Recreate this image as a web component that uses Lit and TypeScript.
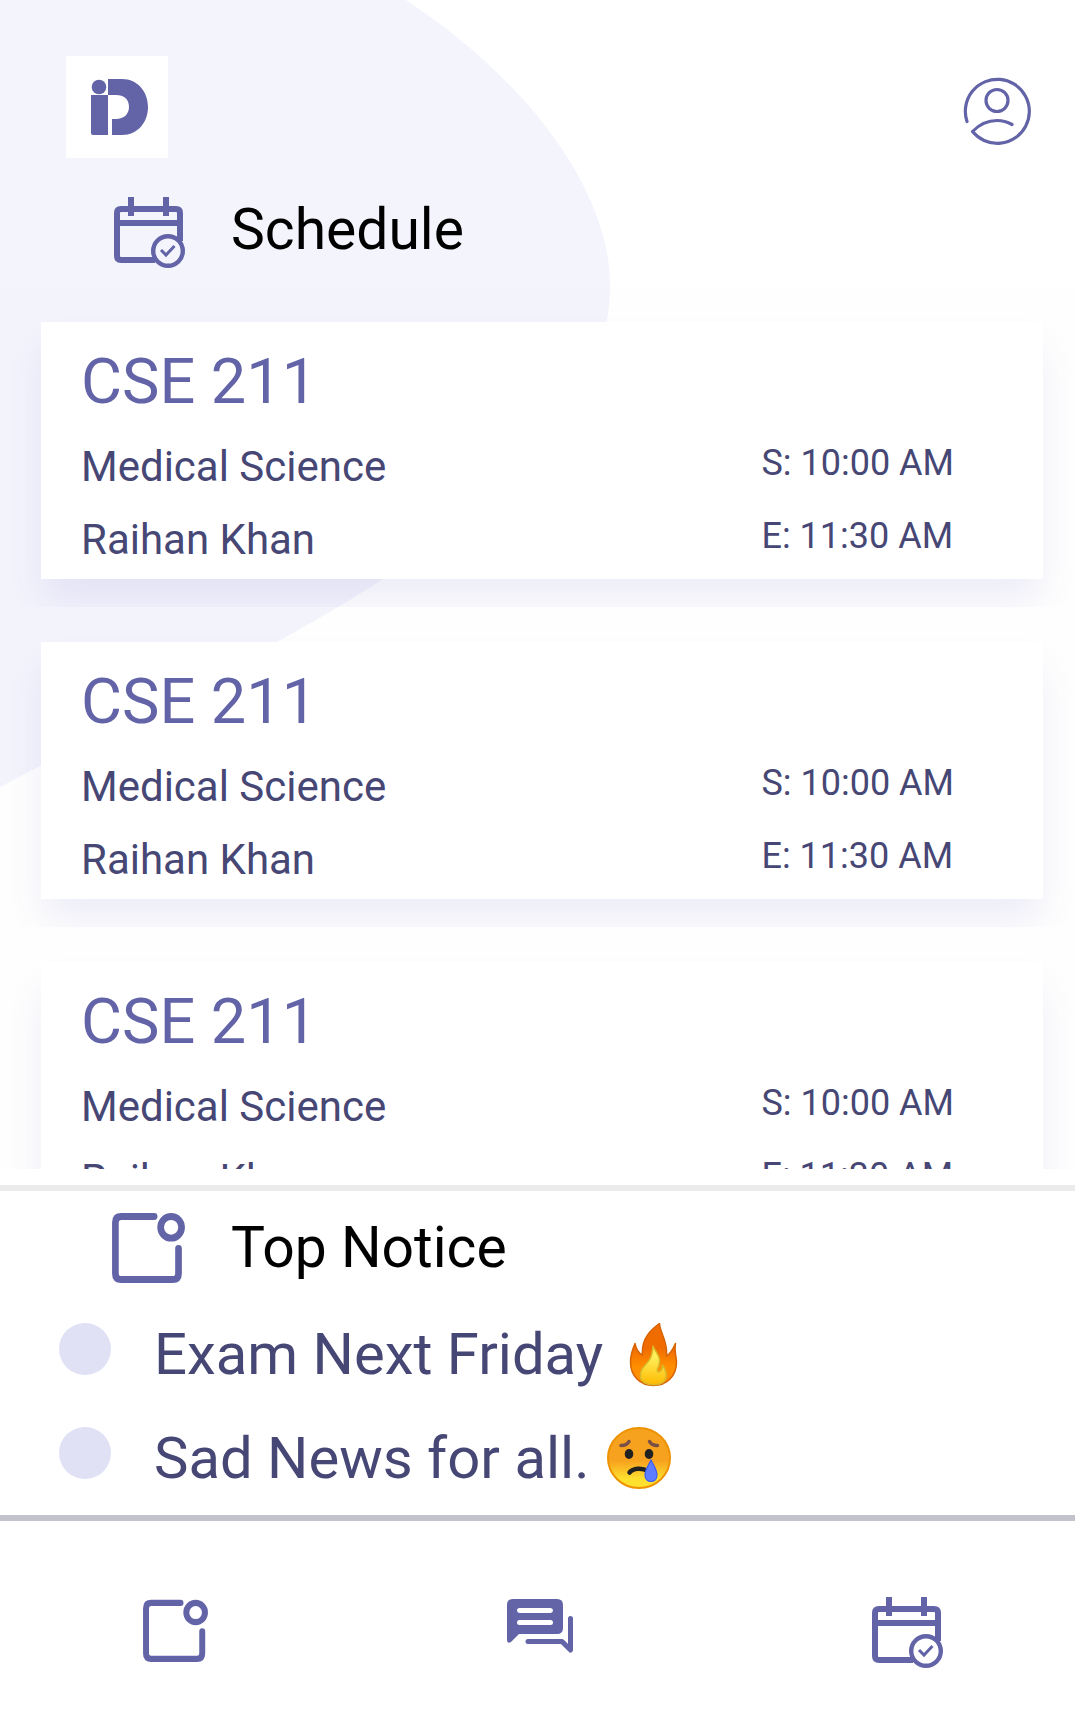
import { LitElement, html, css, svg } from "lit";
import { customElement, property } from "lit/decorators.js";

interface ClassSlot {
  code: string;
  subject: string;
  teacher: string;
  start: string;
  end: string;
}

const slots: ClassSlot[] = Array.from({ length: 3 }, () => ({
  code: "CSE 211",
  subject: "Medical Science",
  teacher: "Raihan Khan",
  start: "10:00 AM",
  end: "11:30 AM",
}));

const fireEmoji = html`
  <svg width="64" height="64" viewBox="0 0 64 64" role="img" aria-label="🔥">
    <defs>
      <linearGradient id="flame" x1="0" y1="0" x2="0" y2="1">
        <stop offset="0.400" stop-color="#f06c00" />
        <stop offset="0.700" stop-color="#ff8f00" />
      </linearGradient>
      <linearGradient id="core" x1="0" y1="0" x2="0" y2="1">
        <stop offset="0.300" stop-color="#ffee58" />
        <stop offset="1" stop-color="#ffb900" />
      </linearGradient>
    </defs>
    <path d="M38.500 0.500C39 10 47 18 45.500 33C49 31 52 26 54.500 20.500C53 29 55.500 34 55.500 39C55.500 53 46 62.500 32.500 62.500C19 62.500 9.500 53 9.500 39C9.500 32 12 25 14 20.500C15 26 17 30 21.500 32C20 15 31 6 38.500 0.500Z" fill="url(#flame)" stroke="#d66400" stroke-width="1.500" stroke-linejoin="round" />
    <path d="M32 23C35 30 40.500 34 38 42C37 45 35 47 37 49C40 49 41.500 46 41.500 42C45 47 46.500 52 44 57C42 60 38 61.800 32.500 61.800C26 61.800 20 59 19.500 54C19 46 23 44 26 40C31 35 31.500 29 32 23Z" fill="url(#core)" stroke="#d9b82b" stroke-width="1.500" stroke-linejoin="round" />
  </svg>
`;

const cryEmoji = html`
  <svg width="64" height="64" viewBox="0 0 64 64" role="img" aria-label="😢">
    <defs>
      <linearGradient id="face" x1="0" y1="0" x2="0" y2="1">
        <stop offset="0.550" stop-color="#f7a21f" />
        <stop offset="0.850" stop-color="#ffe02e" />
      </linearGradient>
    </defs>
    <ellipse cx="32" cy="31" rx="31" ry="30" fill="url(#face)" stroke="#ed9200" stroke-width="2" />
    <ellipse cx="22" cy="27" rx="4.300" ry="5" fill="#212121" />
    <ellipse cx="42" cy="27" rx="4.300" ry="5" fill="#212121" />
    <path d="M14 18.500Q20 18.500 22 14.500M50.500 18.500Q44.500 18.500 42.500 14.500" fill="none" stroke="#795046" stroke-width="3.500" stroke-linecap="round" />
    <path d="M22.500 45.500C26 41 35 40.500 41 44" fill="none" stroke="#212121" stroke-width="4.500" stroke-linecap="round" />
    <path d="M44 33C46 38 50 42 50 48C50 52 47.500 54.500 44 54.500C40.500 54.500 38 52 38 48C38 42 42 38 44 33Z" fill="#5c7dff" stroke="#3d5bf0" stroke-width="1.200" />
  </svg>
`;

const notices = [
  { text: "Exam Next Friday", emoji: fireEmoji },
  { text: "Sad News for all.", emoji: cryEmoji },
];

const calendarIcon = html`
  <svg width="71" height="71" viewBox="0 0 71 71" fill="none" stroke="currentColor" aria-hidden="true">
    <path d="M41 63H7Q3 63 3 59V16Q3 12 7 12H62Q66 12 66 16V44" stroke-width="6" />
    <path d="M3 26H66" stroke-width="6" />
    <path d="M17 0V19M52 0V19" stroke-width="6" />
    <circle cx="54" cy="54" r="14.800" stroke-width="4.400" />
    <path d="M47 53L52 58L60.500 49" stroke-width="3" />
  </svg>
`;

const noticeShape = svg`
  <path d="M41 3.300H9Q3.300 3.300 3.300 9V57Q3.300 62.700 9 62.700H59Q64.700 62.700 64.700 57V33.500" stroke-width="6.500" stroke-linecap="round" />
  <circle cx="57.500" cy="13.500" r="10.200" stroke-width="6.500" />
`;

@customElement("schedule-card")
export class ScheduleCard extends LitElement {
  @property({ attribute: false }) slotData!: ClassSlot;

  static styles = css`
    :host {
      display: block;
      padding: 35px 32px 28px 41px;
      overflow: hidden;
    }
    .card {
      background: #fff;
      padding: 15px 89px 3px 40px;
      box-shadow: 0 24px 36px -4px rgba(90, 92, 190, 0.11);
    }
    .code {
      margin: 0;
      font-size: 63px;
      line-height: 89px;
      font-weight: 400;
      color: #6264a7;
    }
    .body {
      display: flex;
      justify-content: space-between;
      color: #464775;
      line-height: 73px;
    }
    p {
      margin: 0;
    }
    .who {
      padding-top: 4px;
      font-size: 42px;
    }
    .when {
      padding-top: 1px;
      font-size: 36px;
    }
  `;

  render() {
    const s = this.slotData;
    return html`
      <article class="card">
        <h3 class="code">${s.code}</h3>
        <div class="body">
          <div class="who">
            <p>${s.subject}</p>
            <p>${s.teacher}</p>
          </div>
          <div class="when">
            <p>S: ${s.start}</p>
            <p>E: ${s.end}</p>
          </div>
        </div>
      </article>
    `;
  }
}

@customElement("app-root")
export class AppRoot extends LitElement {
  static styles = css`
    :host {
      display: flex;
      flex-direction: column;
      position: relative;
      height: 100vh;
      overflow: hidden;
      background: #fff;
      font-family: Roboto, sans-serif;
      color: #464775;
    }
    * {
      box-sizing: border-box;
    }
    svg {
      display: block;
      flex: none;
    }
    .blob {
      position: absolute;
      top: 0;
      left: 0;
    }
    header,
    .schedule,
    .notices,
    nav {
      position: relative;
    }
    header {
      display: flex;
      justify-content: space-between;
      align-items: flex-end;
      padding: 56px 44px 0 66px;
    }
    .profile {
      padding: 0 0 13px;
      border: 0;
      background: none;
      color: #6264a7;
      cursor: pointer;
    }
    .schedule {
      flex: 1;
      min-height: 0;
      display: flex;
      flex-direction: column;
      padding-bottom: 16px;
    }
    .heading {
      display: flex;
      align-items: flex-start;
      gap: 46px;
      padding: 39px 32px 19px 114px;
      color: #6264a7;
    }
    .heading.centered {
      align-items: center;
      padding: 22px 32px 19px 112px;
    }
    h2 {
      margin: 0;
      font-size: 57px;
      line-height: 66px;
      font-weight: 400;
      color: #000;
    }
    .list {
      flex: 1;
      min-height: 0;
      overflow-y: auto;
      scrollbar-width: none;
      background: rgba(0, 0, 0, 0.004);
    }
    .notices {
      border-top: 6px solid #ebebec;
      border-bottom: 6px solid #c3c3cb;
      padding-bottom: 5px;
    }
    ul {
      list-style: none;
      margin: 0;
      padding: 0;
    }
    .notice {
      display: flex;
      align-items: flex-start;
      height: 104px;
      padding: 21px 32px 0 59px;
      font-size: 58px;
      line-height: 62px;
    }
    .dot {
      flex: none;
      width: 52px;
      height: 52px;
      margin-right: 43px;
      border-radius: 50%;
      background: #e1e1f6;
    }
    .label {
      margin-right: 18px;
    }
    nav {
      display: flex;
      justify-content: space-between;
      align-items: flex-start;
      height: 190px;
      padding: 76px 132px 0 143px;
    }
    nav a {
      color: #6264a7;
    }
  `;

  render() {
    return html`
      <svg class="blob" width="610" height="787" viewBox="0 0 610 787" aria-hidden="true">
        <path fill="#f4f4fd" d="M0 0H406C532 83 610 194 610 285C610 420 480 530 277 642L0 787Z" />
      </svg>

      <header>
        <svg width="102" height="102" viewBox="0 0 102 102" role="img" aria-label="iD">
          <rect width="102" height="102" fill="#fff" />
          <g fill="#6264a7">
            <circle cx="33" cy="31" r="7.300" />
            <path d="M25 39H42V79H27Q25 79 25 77Z" />
            <path d="M42 23H56C72 23 82 36 82 51C82 66 72 79 56 79H46V63H50C58 63 63 58 63 51C63 43 58 39 50 39H42Z" />
          </g>
        </svg>
        <button class="profile" aria-label="Profile">
          <svg width="68" height="68" viewBox="0 0 68 68" fill="none" stroke="currentColor" stroke-width="3.200" stroke-linecap="round" stroke-linejoin="round" aria-hidden="true">
            <path d="M4 44.500A32 32 0 1 1 9.500 54.500Q20 43.500 34 43.500Q42 43.500 49 47.500" />
            <circle cx="34" cy="23.500" r="11" />
          </svg>
        </button>
      </header>

      <section class="schedule">
        <div class="heading">${calendarIcon}<h2>Schedule</h2></div>
        <div class="list">
          ${slots.map((s) => html`<schedule-card .slotData=${s}></schedule-card>`)}
        </div>
      </section>

      <section class="notices">
        <div class="heading centered">
          <svg width="73" height="70" viewBox="0 0 71 66" preserveAspectRatio="none" fill="none" stroke="currentColor" aria-hidden="true">${noticeShape}</svg>
          <h2>Top Notice</h2>
        </div>
        <ul>
          ${notices.map(
            (n) => html`<li class="notice"><span class="dot"></span><span class="label">${n.text}</span>${n.emoji}</li>`
          )}
        </ul>
      </section>

      <nav aria-label="Main">
        <a href="#notices" aria-label="Notices">
          <svg width="65" height="65" viewBox="0 -3 71 69" preserveAspectRatio="none" fill="none" stroke="currentColor" aria-hidden="true">${noticeShape}</svg>
        </a>
        <a href="#chat" aria-label="Chat">
          <svg width="66" height="57" viewBox="0 -2 66 57" fill="currentColor" aria-hidden="true">
            <path fill-rule="evenodd" d="M6 0H50Q56 0 56 6V29Q56 35 50 35H12L4 43Q0 45 0 41V6Q0 0 6 0ZM12.500 9A2.500 2.500 0 0 0 12.500 14H43.500A2.500 2.500 0 0 0 43.500 9ZM12.500 21A2.500 2.500 0 0 0 12.500 26H43.500A2.500 2.500 0 0 0 43.500 21Z" />
            <path d="M21 42.500H55L63.500 51V19.500" fill="none" stroke="currentColor" stroke-width="5" stroke-linecap="round" stroke-linejoin="round" />
          </svg>
        </a>
        <a href="#schedule" aria-label="Schedule">${calendarIcon}</a>
      </nav>
    `;
  }
}
